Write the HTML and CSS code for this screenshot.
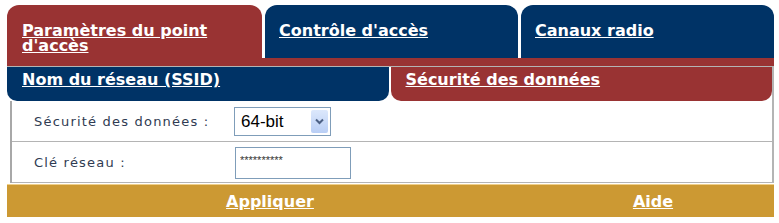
FILE: index.html
```html
<!DOCTYPE html>
<html lang="fr">
<head>
  <meta charset="UTF-8" />
  <title>Sécurité des données</title>
  <link rel="stylesheet" href="styles.css">
</head>
<body>
  <div class="page">

    <div class="tabs">
      <div class="tab active"><a href="#">Paramètres du point d'accès</a></div>
      <div class="tab access"><a href="#">Contrôle d'accès</a></div>
      <div class="tab radio"><a href="#">Canaux radio</a></div>
    </div>
    <div class="band"></div>

    <div class="subtabs">
      <div class="subtab"><a href="#">Nom du réseau (SSID)</a></div>
      <div class="subtab active"><a href="#">Sécurité des données</a></div>
    </div>

    <div class="content">
      <div class="row">
        <div class="label">Sécurité des données :</div>
        <div class="select-box">
          <select>
            <option>64-bit</option>
            <option>128-bit</option>
          </select>
          <span class="arrow">
            <svg width="9" height="7" viewBox="0 0 9 7"><path d="M1 1.5 L4.5 5 L8 1.5" fill="none" stroke="#4d6185" stroke-width="2"/></svg>
          </span>
        </div>
      </div>
      <div class="row">
        <div class="label">Clé réseau :</div>
        <input type="text" class="key-input" value="**********" />
      </div>
    </div>

    <div class="footer">
      <div class="footer-cell"><a href="#">Appliquer</a></div>
      <div class="footer-cell help"><a href="#">Aide</a></div>
    </div>

  </div>
</body>
</html>
```

FILE: styles.css
```css
body {
  margin: 0;
  background-color: #fff;
  font-family: "DejaVu Sans", Verdana, sans-serif;
}
a {
  color: #fff;
}
.page {
  width: 767px;
  margin: 5px 0 0 7px;
}
.tabs {
  display: flex;
  height: 53px;
}
.tab {
  width: 255px;
  flex: none;
  background-color: #003366;
  border-radius: 12px 12px 0 0;
  padding: 18px 14px 0 14px;
  box-sizing: border-box;
  font-size: 16px;
  font-weight: bold;
  line-height: 15px;
}
.tab.active {
  background-color: #993333;
  padding-left: 15px;
  padding-right: 40px;
}
.tab.access {
  width: 253px;
  margin-left: 3px;
}
.tab.radio {
  width: 253px;
  margin-left: 3px;
}
.band {
  height: 8px;
  background-color: #993333;
}
.subtabs {
  display: flex;
  gap: 2px;
  height: 34px;
  border-top: 1px solid #b4b4b4;
  border-right: 2px solid #b4b4b4;
}
.subtab {
  flex: 1;
  background-color: #003366;
  border-radius: 0 0 10px 10px;
  padding: 3px 15px 0 15px;
  font-size: 16px;
  font-weight: bold;
}
.subtab.active {
  background-color: #993333;
}
.content {
  margin-left: 3px;
  border-left: 2px solid #a8a8a8;
  border-right: 2px solid #b4b4b4;
}
.row {
  display: flex;
  align-items: center;
  height: 40px;
  border-bottom: 1px solid #b4b4b4;
}
.label {
  width: 200px;
  padding-left: 22px;
  font-size: 13px;
  letter-spacing: 1.2px;
  color: #2f3b52;
}
.select-box {
  position: relative;
  margin-top: 1px;
}
.select-box select {
  appearance: none;
  width: 97px;
  height: 29px;
  border: 1px solid #7f9db9;
  border-radius: 0;
  background-color: #fff;
  padding: 0 0 0 6px;
  font-family: "Liberation Sans", Arial, sans-serif;
  font-size: 17px;
  color: #000;
}
.arrow {
  position: absolute;
  top: 3px;
  right: 3px;
  width: 17px;
  height: 23px;
  background: linear-gradient(#dce8fc, #b9cef5);
  border-radius: 2px;
  display: flex;
  align-items: center;
  justify-content: center;
}
.key-input {
  width: 106px;
  height: 23px;
  margin: 2px 0 0 1px;
  border: 1px solid #7f9db9;
  padding: 0 4px 7px 4px;
  font-family: "Liberation Sans", Arial, sans-serif;
  font-size: 11px;
  color: #333;
}
.footer {
  display: flex;
  height: 32px;
  margin-top: 1px;
  background-color: #cc9933;
  border-top: 1px solid #f0d08a;
  font-size: 16px;
  font-weight: bold;
}
.footer-cell {
  width: 526px;
  display: flex;
  align-items: center;
  justify-content: center;
}
.footer-cell.help {
  width: 240px;
}
```
